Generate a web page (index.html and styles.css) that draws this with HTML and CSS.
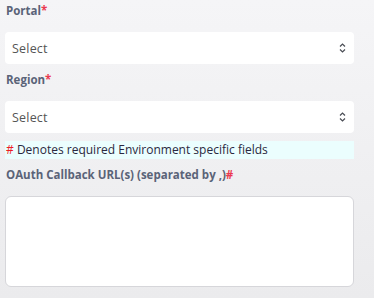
FILE: index.html
```html
<!DOCTYPE html>
<html lang="en">

<head>
    <meta charset="UTF-8">
    <meta name="viewport" content="width=device-width, initial-scale=1.0">
    <title>Environment Settings</title>
    <link rel="stylesheet" href="styles.css">
</head>

<body>

    <div class="container">
        <div class="field">
            <label for="portal">Portal<span class="req">*</span></label>
            <div class="select-wrap">
                <select id="portal">
                    <option value="">Select</option>
                </select>
                <svg class="chevron" width="7" height="10" viewBox="0 0 7 10">
                    <path d="M1 3.5 L3.5 1 L6 3.5 M1 6.5 L3.5 9 L6 6.5" fill="none" stroke="#4a4d55" stroke-width="1.2" />
                </svg>
            </div>
        </div>

        <div class="field">
            <label for="region">Region<span class="req">*</span></label>
            <div class="select-wrap">
                <select id="region">
                    <option value="">Select</option>
                </select>
                <svg class="chevron" width="7" height="10" viewBox="0 0 7 10">
                    <path d="M1 3.5 L3.5 1 L6 3.5 M1 6.5 L3.5 9 L6 6.5" fill="none" stroke="#4a4d55" stroke-width="1.2" />
                </svg>
            </div>
        </div>

        <div class="note"><span class="hash">#</span> Denotes required Environment specific fields</div>

        <div class="field">
            <label for="callback">OAuth Callback URL(s) (separated by ,)<span class="req">#</span></label>
            <textarea id="callback"></textarea>
        </div>
    </div>

</body>

</html>
```

FILE: styles.css
```css
body {
    margin: 0;
    font-family: "Open Sans", Arial, sans-serif;
    background: linear-gradient(#f5f5f7, #ebebed);
    height: 298px;
    overflow: hidden;
}

.container {
    width: 349px;
    padding: 3px 0 0 5px;
}

.field {
    margin-bottom: 8px;
}

label {
    display: block;
    font-size: 11.5px;
    font-weight: bold;
    line-height: 16px;
    color: #5a6378;
    margin: 0 0 13px 1px;
}

.req {
    color: #ea3a50;
}

.select-wrap {
    position: relative;
}

select {
    display: block;
    width: 100%;
    height: 32px;
    padding: 0 7px;
    border: none;
    border-radius: 4px;
    background: #fff;
    font-family: "Open Sans", Arial, sans-serif;
    font-size: 12.5px;
    letter-spacing: 0.2px;
    color: #555;
    appearance: none;
    -webkit-appearance: none;
}

.chevron {
    position: absolute;
    right: 8px;
    top: 11px;
}

.note {
    background: #ebfefe;
    height: 18px;
    line-height: 18px;
    margin: 1px 0 8px;
    padding-left: 1px;
    font-size: 12px;
    color: #2a2840;
}

.hash {
    color: #ee1c25;
}

textarea {
    display: block;
    box-sizing: border-box;
    width: 100%;
    height: 91px;
    border: 1px solid #d6d6da;
    border-radius: 6px;
    background: #fff;
    resize: none;
}
```
